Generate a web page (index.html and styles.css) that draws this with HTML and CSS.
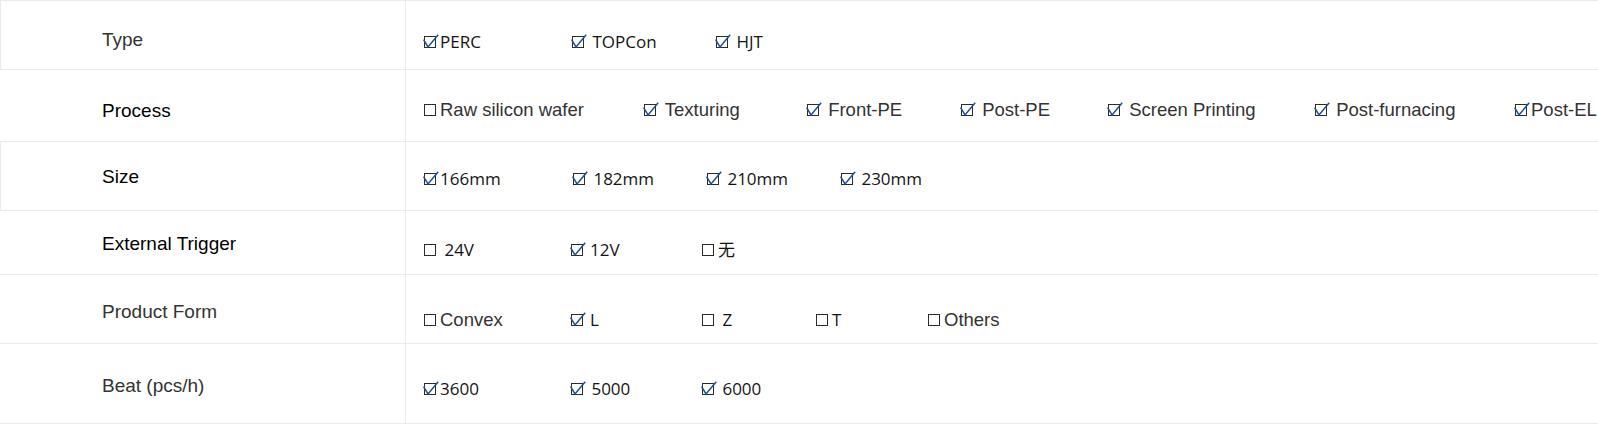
FILE: index.html
```html
<!DOCTYPE html>
<html lang="en">
<head>
<meta charset="utf-8">
<title>Specifications</title>
<link rel="stylesheet" href="styles.css">
</head>
<body>
<svg width="0" height="0" class="defs" aria-hidden="true">
  <defs>
    <symbol id="box" viewBox="0 0 14 14" overflow="visible">
      <rect x="1.5" y="1.5" width="11" height="11" fill="none" stroke="#2b2b2b" stroke-width="1"/>
    </symbol>
    <symbol id="checked" viewBox="0 0 14 14" overflow="visible">
      <rect x="1.5" y="1.5" width="11" height="11" fill="none" stroke="#2b2b2b" stroke-width="1"/>
      <path d="M0.6 4.6 L5 12 L15.2 -0.2" fill="none" stroke="#1d4f92" stroke-width="1.5" stroke-linejoin="miter"/>
    </symbol>
  </defs>
</svg>

<div class="spec">
  <div class="row r1">
    <div class="label boxed muted">Type</div>
    <div class="opts c-type">
      <span class="opt seg"><svg class="cb"><use href="#checked"/></svg>PERC</span>
      <span class="opt seg"><svg class="cb"><use href="#checked"/></svg> TOPCon</span>
      <span class="opt seg"><svg class="cb"><use href="#checked"/></svg> HJT</span>
    </div>
  </div>

  <div class="row r2">
    <div class="label dark">Process</div>
    <div class="opts c-process">
      <span class="opt ari"><svg class="cb"><use href="#box"/></svg>Raw silicon wafer</span>
      <span class="opt ari"><svg class="cb"><use href="#checked"/></svg> Texturing</span>
      <span class="opt ari"><svg class="cb"><use href="#checked"/></svg> Front-PE</span>
      <span class="opt ari"><svg class="cb"><use href="#checked"/></svg> Post-PE</span>
      <span class="opt ari"><svg class="cb"><use href="#checked"/></svg> Screen Printing</span>
      <span class="opt ari"><svg class="cb"><use href="#checked"/></svg> Post-furnacing</span>
      <span class="opt ari"><svg class="cb"><use href="#checked"/></svg>Post-EL</span>
    </div>
  </div>

  <div class="row r3">
    <div class="label boxed dark">Size</div>
    <div class="opts c-size">
      <span class="opt seg"><svg class="cb"><use href="#checked"/></svg>166mm</span>
      <span class="opt seg"><svg class="cb"><use href="#checked"/></svg> 182mm</span>
      <span class="opt seg"><svg class="cb"><use href="#checked"/></svg> 210mm</span>
      <span class="opt seg"><svg class="cb"><use href="#checked"/></svg> 230mm</span>
    </div>
  </div>

  <div class="row r4">
    <div class="label dark">External Trigger</div>
    <div class="opts c-trigger">
      <span class="opt seg"><svg class="cb"><use href="#box"/></svg> 24V</span>
      <span class="opt seg"><svg class="cb wide"><use href="#checked"/></svg>12V</span>
      <span class="opt seg"><svg class="cb"><use href="#box"/></svg>无</span>
    </div>
  </div>

  <div class="row r5">
    <div class="label muted">Product Form</div>
    <div class="opts c-form">
      <span class="opt ari"><svg class="cb"><use href="#box"/></svg>Convex</span>
      <span class="opt seg"><svg class="cb wide"><use href="#checked"/></svg>L</span>
      <span class="opt seg"><svg class="cb"><use href="#box"/></svg> Z</span>
      <span class="opt seg"><svg class="cb"><use href="#box"/></svg>T</span>
      <span class="opt ari"><svg class="cb"><use href="#box"/></svg>Others</span>
    </div>
  </div>

  <div class="row r6">
    <div class="label muted">Beat (pcs/h)</div>
    <div class="opts c-beat">
      <span class="opt seg"><svg class="cb"><use href="#checked"/></svg>3600</span>
      <span class="opt seg"><svg class="cb"><use href="#checked"/></svg> 5000</span>
      <span class="opt seg"><svg class="cb"><use href="#checked"/></svg> 6000</span>
    </div>
  </div>
</div>
</body>
</html>
```

FILE: styles.css
```css
html, body {
  margin: 0;
  padding: 0;
  background: #ffffff;
}

body {
  font-family: "Liberation Sans", Arial, sans-serif;
  color: #333333;
  overflow: hidden;
}

.defs {
  position: absolute;
  width: 0;
  height: 0;
}

.spec {
  width: 1598px;
  border-top: 1px solid #ebebeb;
}

.row {
  display: grid;
  grid-template-columns: 406px 1fr;
  border-bottom: 1px solid #ebebeb;
  box-sizing: content-box;
}

.label {
  border-right: 1px solid #ebebeb;
  padding-left: 102px;
  font-size: 19px;
  line-height: 24px;
  white-space: nowrap;
}

.label.boxed {
  border-left: 1px solid #ebebeb;
  padding-left: 101px;
}

.label.muted { color: #333333; }
.label.dark { color: #000000; }

.opts {
  display: grid;
  align-items: baseline;
  padding-left: 17px;
  line-height: 24px;
  color: #222222;
  white-space: nowrap;
}

.opt {
  white-space: pre;
}

.seg {
  font-family: "Open Sans", "Noto Sans CJK SC", sans-serif;
  font-size: 17px;
  color: #141414;
}

.ari {
  font-family: "Liberation Sans", Arial, sans-serif;
  font-size: 18.5px;
  color: #333333;
}

.cb {
  width: 14px;
  height: 14px;
  overflow: visible;
  vertical-align: -1px;
  margin-right: 3px;
}

.cb.wide {
  margin-right: 6px;
}

/* row heights and vertical offsets */
.r1 { height: 68px; }
.r1 .label { padding-top: 27px; }
.r1 .opts { padding-top: 29px; }

.r2 { height: 71px; }
.r2 .label { padding-top: 29px; }
.r2 .opts { padding-top: 28px; }

.r3 { height: 68px; }
.r3 .label { padding-top: 23px; }
.r3 .opts { padding-top: 25px; }

.r4 { height: 63px; }
.r4 .label { padding-top: 21px; }
.r4 .opts { padding-top: 27px; }

.r5 { height: 68px; }
.r5 .label { padding-top: 25px; }
.r5 .opts { padding-top: 33px; }

.r6 { height: 79px; }
.r6 .label { padding-top: 30px; }
.r6 .opts { padding-top: 33px; }

/* option column tracks */
.c-type { grid-template-columns: 148px 144px auto; }
.c-process { grid-template-columns: 220px 163px 154px 147px 207px 200px auto; }
.c-size { grid-template-columns: 149px 134px 134px auto; }
.c-trigger { grid-template-columns: 147px 131px auto; }
.c-form { grid-template-columns: 147px 131px 114px 112px auto; }
.c-beat { grid-template-columns: 147px 131px auto; }
```
